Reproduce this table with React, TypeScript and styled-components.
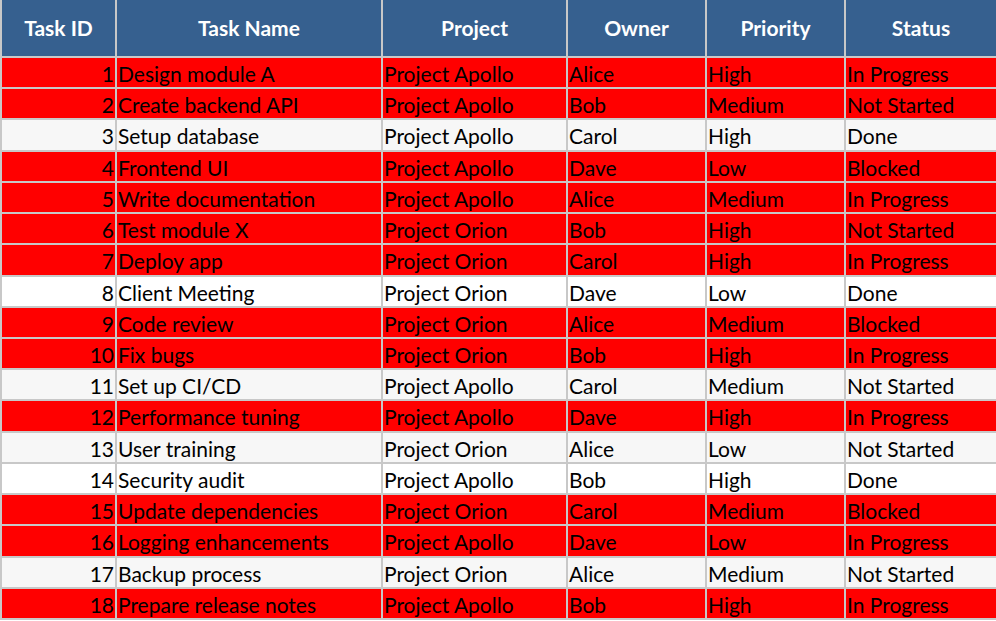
import React from "react";
import styled, { createGlobalStyle } from "styled-components";

const Global = createGlobalStyle`
  html, body { margin: 0; padding: 0; background: #ffffff; }
  body { font-family: Lato, "Open Sans", sans-serif; }
`;

type Task = {
  id: number;
  name: string;
  project: string;
  owner: string;
  priority: string;
  status: string;
  alert: boolean;
};

const tasks: Task[] = [
  { id: 1, name: "Design module A", project: "Project Apollo", owner: "Alice", priority: "High", status: "In Progress", alert: true },
  { id: 2, name: "Create backend API", project: "Project Apollo", owner: "Bob", priority: "Medium", status: "Not Started", alert: true },
  { id: 3, name: "Setup database", project: "Project Apollo", owner: "Carol", priority: "High", status: "Done", alert: false },
  { id: 4, name: "Frontend UI", project: "Project Apollo", owner: "Dave", priority: "Low", status: "Blocked", alert: true },
  { id: 5, name: "Write documentation", project: "Project Apollo", owner: "Alice", priority: "Medium", status: "In Progress", alert: true },
  { id: 6, name: "Test module X", project: "Project Orion", owner: "Bob", priority: "High", status: "Not Started", alert: true },
  { id: 7, name: "Deploy app", project: "Project Orion", owner: "Carol", priority: "High", status: "In Progress", alert: true },
  { id: 8, name: "Client Meeting", project: "Project Orion", owner: "Dave", priority: "Low", status: "Done", alert: false },
  { id: 9, name: "Code review", project: "Project Orion", owner: "Alice", priority: "Medium", status: "Blocked", alert: true },
  { id: 10, name: "Fix bugs", project: "Project Orion", owner: "Bob", priority: "High", status: "In Progress", alert: true },
  { id: 11, name: "Set up CI/CD", project: "Project Apollo", owner: "Carol", priority: "Medium", status: "Not Started", alert: false },
  { id: 12, name: "Performance tuning", project: "Project Apollo", owner: "Dave", priority: "High", status: "In Progress", alert: true },
  { id: 13, name: "User training", project: "Project Orion", owner: "Alice", priority: "Low", status: "Not Started", alert: false },
  { id: 14, name: "Security audit", project: "Project Apollo", owner: "Bob", priority: "High", status: "Done", alert: false },
  { id: 15, name: "Update dependencies", project: "Project Orion", owner: "Carol", priority: "Medium", status: "Blocked", alert: true },
  { id: 16, name: "Logging enhancements", project: "Project Apollo", owner: "Dave", priority: "Low", status: "In Progress", alert: true },
  { id: 17, name: "Backup process", project: "Project Orion", owner: "Alice", priority: "Medium", status: "Not Started", alert: false },
  { id: 18, name: "Prepare release notes", project: "Project Apollo", owner: "Bob", priority: "High", status: "In Progress", alert: true },
];

const columns = [
  { label: "Task ID", width: 115 },
  { label: "Task Name", width: 266 },
  { label: "Project", width: 185 },
  { label: "Owner", width: 139 },
  { label: "Priority", width: 139 },
  { label: "Status", width: 152 },
];

const BODY_HEIGHT = 562;

const Table = styled.table`
  width: 996px;
  border-collapse: collapse;
  table-layout: fixed;
  font-family: Lato, "Open Sans", sans-serif;
`;

const HeadCell = styled.th`
  background: #36608f;
  color: #ffffff;
  font-weight: 700;
  font-size: 21px;
  text-align: center;
  vertical-align: middle;
  height: 57px;
  padding: 0 2px 2px 2px;
  border: 2px solid #c8c8c8;
  border-top: none;
  box-sizing: border-box;
`;

const Row = styled.tr<{ $alert: boolean; $odd: boolean }>`
  background: ${(p) => (p.$alert ? "#ff0000" : p.$odd ? "#f7f7f7" : "#ffffff")};
`;

const Cell = styled.td<{ $right?: boolean; $h: number }>`
  font-size: 21px;
  color: #000000;
  text-align: ${(p) => (p.$right ? "right" : "left")};
  white-space: nowrap;
  overflow: hidden;
  box-sizing: content-box;
  height: ${(p) => p.$h - 4}px;
  padding: 2px 1px 0 1px;
  line-height: 24px;
  vertical-align: middle;
  border: 2px solid #c8c8c8;
`;

export default function App() {
  const n = tasks.length;
  const edge = (i: number) => Math.round((i * BODY_HEIGHT) / n);
  return (
    <>
      <Global />
      <Table>
        <colgroup>
          {columns.map((c) => (
            <col key={c.label} style={{ width: c.width }} />
          ))}
        </colgroup>
        <thead>
          <tr>
            {columns.map((c) => (
              <HeadCell key={c.label}>{c.label}</HeadCell>
            ))}
          </tr>
        </thead>
        <tbody>
          {tasks.map((t, i) => {
            const h = edge(i + 1) - edge(i);
            return (
              <Row key={t.id} $alert={t.alert} $odd={t.id % 2 === 1}>
                <Cell $right $h={h}>{t.id}</Cell>
                <Cell $h={h}>{t.name}</Cell>
                <Cell $h={h}>{t.project}</Cell>
                <Cell $h={h}>{t.owner}</Cell>
                <Cell $h={h}>{t.priority}</Cell>
                <Cell $h={h}>{t.status}</Cell>
              </Row>
            );
          })}
        </tbody>
      </Table>
    </>
  );
}
